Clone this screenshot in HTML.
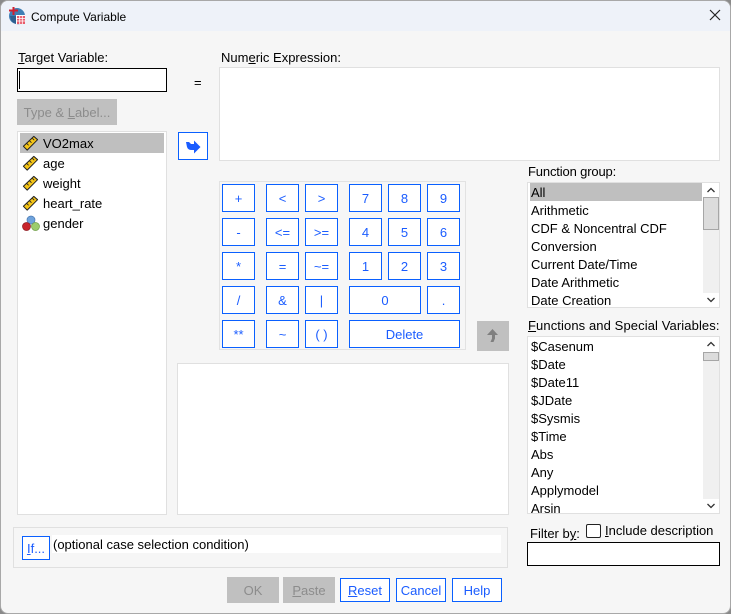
<!DOCTYPE html>
<html><head><meta charset="utf-8">
<style>
html,body{margin:0;padding:0;width:731px;height:614px;overflow:hidden;background:#8a8a8a}
*{box-sizing:border-box}
#w{position:absolute;left:0;top:0;width:731px;height:614px;background:#f6f6f6;border:1px solid #a8a8a8;border-radius:8px;overflow:hidden;font-family:"Liberation Sans",sans-serif;font-size:13px;color:#000}
#o{position:absolute;left:-1px;top:-1px;width:731px;height:614px}
#o>*{position:absolute}
.t{white-space:nowrap;line-height:18px;height:18px;margin-top:1px}
.box{background:#fff;border:1px solid #e0e0e0}
.in{background:#fff;border:1px solid #000}
.b{background:#fff;border:1px solid #0a60ff;color:#1a5cff;text-align:center;white-space:nowrap;padding-top:1px}
.d{background:#c0c0c0;color:#8c8c8c;text-align:center;white-space:nowrap;padding-top:1px}
.sel{background:#bfbfbf}
.sb{background:#f0f0f0}
.th{background:#dcdcdc;border:1px solid #a6a6a6}
</style></head><body>
<div id="w"><div id="o">
<div style="left:0;top:0;width:731px;height:31px;background:#eef2f9"></div>
<svg style="left:8px;top:6px" width="19" height="19" viewBox="0 0 19 19"><circle cx="9" cy="10" r="8" fill="#3f7fb5"/><path d="M3 14a8 8 0 0 0 9 4V10H2z" fill="#2f5f8f"/><rect x="8" y="9" width="9" height="9" fill="#fff"/><path d="M9 10h8v8H9z" fill="#e85a6a"/><path d="M9 12.500h8M9 15h8M11.700 10v8M14.300 10v8" stroke="#fff" stroke-width=".8"/><path d="M1 4.500h9M5.500 1v8" stroke="#d11f2e" stroke-width="2"/></svg>
<div class="t" style="left:31px;top:7px;font-size:12px">Compute Variable</div>
<svg style="left:709px;top:9px" width="12" height="12" viewBox="0 0 12 12"><path d="M1 1l10 10M11 1L1 11" stroke="#222" stroke-width="1.200"/></svg>

<div class="t" style="left:18px;top:48px"><u>T</u>arget Variable:</div>
<div class="in" style="left:17px;top:68px;width:150px;height:24px"></div>
<div style="left:19px;top:71px;width:1px;height:18px;background:#000"></div>
<div class="t" style="left:194px;top:73px">=</div>
<div class="d" style="left:17px;top:99px;width:100px;height:26px;line-height:26px">Type &amp; <u>L</u>abel...</div>

<div class="box" style="left:17px;top:131px;width:150px;height:384px"></div>
<div class="sel" style="left:20px;top:133px;width:144px;height:20px"></div>
<svg style="left:22px;top:135px" width="17" height="16" viewBox="0 0 18 16"><path d="M1.500 11.500L12.500 1l4 3.500L5.500 15.500z" fill="#f5c518" stroke="#222" stroke-width="1.100" stroke-linejoin="round"/><path d="M5 8.500l2 2M8 5.700l2 2M11 3l2 2" stroke="#222" stroke-width=".9"/></svg>
<svg style="left:22px;top:155px" width="17" height="16" viewBox="0 0 18 16"><path d="M1.500 11.500L12.500 1l4 3.500L5.500 15.500z" fill="#f5c518" stroke="#222" stroke-width="1.100" stroke-linejoin="round"/><path d="M5 8.500l2 2M8 5.700l2 2M11 3l2 2" stroke="#222" stroke-width=".9"/></svg>
<svg style="left:22px;top:175px" width="17" height="16" viewBox="0 0 18 16"><path d="M1.500 11.500L12.500 1l4 3.500L5.500 15.500z" fill="#f5c518" stroke="#222" stroke-width="1.100" stroke-linejoin="round"/><path d="M5 8.500l2 2M8 5.700l2 2M11 3l2 2" stroke="#222" stroke-width=".9"/></svg>
<svg style="left:22px;top:195px" width="17" height="16" viewBox="0 0 18 16"><path d="M1.500 11.500L12.500 1l4 3.500L5.500 15.500z" fill="#f5c518" stroke="#222" stroke-width="1.100" stroke-linejoin="round"/><path d="M5 8.500l2 2M8 5.700l2 2M11 3l2 2" stroke="#222" stroke-width=".9"/></svg>
<svg style="left:22px;top:215px" width="18" height="17" viewBox="0 0 18 17"><circle cx="9" cy="5" r="4" fill="#6fa3dc" stroke="#4a78b0" stroke-width=".7"/><circle cx="4.500" cy="11.500" r="4" fill="#c8242c" stroke="#8f1a20" stroke-width=".7"/><circle cx="13.500" cy="11.500" r="4" fill="#9ccc6c" stroke="#6f9f48" stroke-width=".7"/></svg>
<div class="t" style="left:43px;top:134px">VO2max</div>
<div class="t" style="left:43px;top:154px">age</div>
<div class="t" style="left:43px;top:174px">weight</div>
<div class="t" style="left:43px;top:194px">heart_rate</div>
<div class="t" style="left:43px;top:214px">gender</div>

<div class="b" style="left:178px;top:132px;width:30px;height:28px"></div>
<svg style="left:178px;top:132px" width="30" height="28" viewBox="178 132 30 28"><path d="M186 142h3l2 2h3v-3.500l6.500 6.500-6.500 6.500V150h-2.500q-3.500 0-4.500-3z" fill="#1a5cff"/></svg>

<div class="t" style="left:221px;top:48px">Num<u>e</u>ric Expression:</div>
<div class="box" style="left:219px;top:67px;width:501px;height:94px"></div>

<div style="left:219px;top:181px;width:247px;height:169px;background:#f6f6f6;border:1px solid #e2e2e2"></div>
<div class="b" style="left:222px;top:184px;width:33px;height:28px;line-height:26px">+</div>
<div class="b" style="left:266px;top:184px;width:33px;height:28px;line-height:26px">&lt;</div>
<div class="b" style="left:305px;top:184px;width:33px;height:28px;line-height:26px">&gt;</div>
<div class="b" style="left:349px;top:184px;width:33px;height:28px;line-height:26px">7</div>
<div class="b" style="left:388px;top:184px;width:33px;height:28px;line-height:26px">8</div>
<div class="b" style="left:427px;top:184px;width:33px;height:28px;line-height:26px">9</div>
<div class="b" style="left:222px;top:218px;width:33px;height:28px;line-height:26px">-</div>
<div class="b" style="left:266px;top:218px;width:33px;height:28px;line-height:26px">&lt;=</div>
<div class="b" style="left:305px;top:218px;width:33px;height:28px;line-height:26px">&gt;=</div>
<div class="b" style="left:349px;top:218px;width:33px;height:28px;line-height:26px">4</div>
<div class="b" style="left:388px;top:218px;width:33px;height:28px;line-height:26px">5</div>
<div class="b" style="left:427px;top:218px;width:33px;height:28px;line-height:26px">6</div>
<div class="b" style="left:222px;top:252px;width:33px;height:28px;line-height:26px">*</div>
<div class="b" style="left:266px;top:252px;width:33px;height:28px;line-height:26px">=</div>
<div class="b" style="left:305px;top:252px;width:33px;height:28px;line-height:26px">~=</div>
<div class="b" style="left:349px;top:252px;width:33px;height:28px;line-height:26px">1</div>
<div class="b" style="left:388px;top:252px;width:33px;height:28px;line-height:26px">2</div>
<div class="b" style="left:427px;top:252px;width:33px;height:28px;line-height:26px">3</div>
<div class="b" style="left:222px;top:286px;width:33px;height:28px;line-height:26px">/</div>
<div class="b" style="left:266px;top:286px;width:33px;height:28px;line-height:26px">&amp;</div>
<div class="b" style="left:305px;top:286px;width:33px;height:28px;line-height:26px">|</div>
<div class="b" style="left:349px;top:286px;width:72px;height:28px;line-height:26px">0</div>
<div class="b" style="left:427px;top:286px;width:33px;height:28px;line-height:26px">.</div>
<div class="b" style="left:222px;top:320px;width:33px;height:28px;line-height:26px">**</div>
<div class="b" style="left:266px;top:320px;width:33px;height:28px;line-height:26px">~</div>
<div class="b" style="left:305px;top:320px;width:33px;height:28px;line-height:26px">( )</div>
<div class="b" style="left:349px;top:320px;width:111px;height:28px;line-height:26px">Delete</div>

<div class="d" style="left:477px;top:321px;width:32px;height:30px"></div>
<svg style="left:486px;top:328px" width="14" height="15" viewBox="0 0 14 15"><path d="M6.500 1L12 7H9v3.500L7.500 14H4.500L6 10.500V7H1z" fill="#7f7f7f"/></svg>

<div class="box" style="left:177px;top:363px;width:332px;height:152px"></div>

<div class="t" style="left:528px;top:162px;letter-spacing:-.15px">Function <u>g</u>roup:</div>
<div class="box" style="left:527px;top:182px;width:193px;height:126px"></div>
<div class="sel" style="left:530px;top:183px;width:172px;height:18px"></div>
<div class="t" style="left:531px;top:183px">All</div>
<div class="t" style="left:531px;top:201px">Arithmetic</div>
<div class="t" style="left:531px;top:219px">CDF &amp; Noncentral CDF</div>
<div class="t" style="left:531px;top:237px">Conversion</div>
<div class="t" style="left:531px;top:255px">Current Date/Time</div>
<div class="t" style="left:531px;top:273px">Date Arithmetic</div>
<div class="t" style="left:531px;top:291px">Date Creation</div>
<div class="sb" style="left:703px;top:183px;width:16px;height:124px"></div>
<div class="th" style="left:703px;top:197px;width:16px;height:33px"></div>
<div style="left:703px;top:183px;width:16px;height:14px;background:#fff"></div>
<div style="left:703px;top:293px;width:16px;height:14px;background:#fff"></div>
<svg style="left:706px;top:186px" width="10" height="8" viewBox="0 0 10 8"><path d="M1.500 6L5 2.500 8.500 6" fill="none" stroke="#333" stroke-width="1.300"/></svg>
<svg style="left:706px;top:296px" width="10" height="8" viewBox="0 0 10 8"><path d="M1.500 2L5 5.500 8.500 2" fill="none" stroke="#333" stroke-width="1.300"/></svg>

<div class="t" style="left:528px;top:316px;letter-spacing:.1px"><u>F</u>unctions and Special Variables:</div>
<div class="box" style="left:527px;top:336px;width:193px;height:178px"></div>
<div class="t" style="left:531px;top:337px">$Casenum</div>
<div class="t" style="left:531px;top:355px">$Date</div>
<div class="t" style="left:531px;top:373px">$Date11</div>
<div class="t" style="left:531px;top:391px">$JDate</div>
<div class="t" style="left:531px;top:409px">$Sysmis</div>
<div class="t" style="left:531px;top:427px">$Time</div>
<div class="t" style="left:531px;top:445px">Abs</div>
<div class="t" style="left:531px;top:463px">Any</div>
<div class="t" style="left:531px;top:481px">Applymodel</div>
<div style="left:528px;top:499px;width:174px;height:14px;overflow:hidden"><div class="t" style="position:absolute;left:3px;top:0">Arsin</div></div>
<div class="sb" style="left:703px;top:337px;width:16px;height:176px"></div>
<div class="th" style="left:703px;top:352px;width:16px;height:9px"></div>
<div style="left:703px;top:337px;width:16px;height:15px;background:#fff"></div>
<div style="left:703px;top:499px;width:16px;height:14px;background:#fff"></div>
<svg style="left:706px;top:340px" width="10" height="8" viewBox="0 0 10 8"><path d="M1.500 6L5 2.500 8.500 6" fill="none" stroke="#333" stroke-width="1.300"/></svg>
<svg style="left:706px;top:502px" width="10" height="8" viewBox="0 0 10 8"><path d="M1.500 2L5 5.500 8.500 2" fill="none" stroke="#333" stroke-width="1.300"/></svg>

<div class="t" style="left:530px;top:524px">Filter b<u>y</u>:</div>
<div style="left:586px;top:524px;width:15px;height:14px;background:#fff;border:1px solid #222;border-radius:2px"></div>
<div class="t" style="left:605px;top:521px"><u>I</u>nclude description</div>
<div class="in" style="left:527px;top:542px;width:193px;height:24px"></div>

<div style="left:13px;top:527px;width:495px;height:41px;border:1px solid #e0e0e0"></div>
<div style="left:52px;top:535px;width:449px;height:18px;background:#fff"></div>
<div class="b" style="left:22px;top:536px;width:28px;height:24px;line-height:22px"><u>I</u>f...</div>
<div class="t" style="left:53px;top:535px">(optional case selection condition)</div>

<div class="d" style="left:227px;top:577px;width:52px;height:26px;line-height:26px">OK</div>
<div class="d" style="left:283px;top:577px;width:52px;height:26px;line-height:26px"><u>P</u>aste</div>
<div class="b" style="left:340px;top:578px;width:50px;height:24px;line-height:21px"><u>R</u>eset</div>
<div class="b" style="left:396px;top:578px;width:50px;height:24px;line-height:21px">Cancel</div>
<div class="b" style="left:452px;top:578px;width:50px;height:24px;line-height:21px">Help</div>
</div></div>
</body></html>
